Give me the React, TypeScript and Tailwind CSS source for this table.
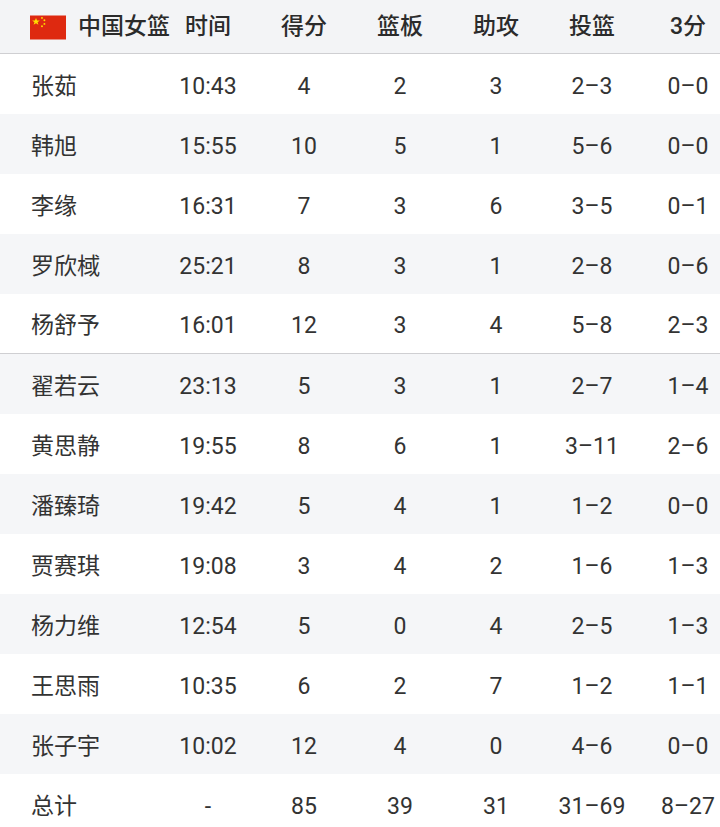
import React from "react";

const rows: [string, string, string, string, string, string, string][] = [
  ["张茹", "10:43", "4", "2", "3", "2–3", "0–0"],
  ["韩旭", "15:55", "10", "5", "1", "5–6", "0–0"],
  ["李缘", "16:31", "7", "3", "6", "3–5", "0–1"],
  ["罗欣棫", "25:21", "8", "3", "1", "2–8", "0–6"],
  ["杨舒予", "16:01", "12", "3", "4", "5–8", "2–3"],
  ["翟若云", "23:13", "5", "3", "1", "2–7", "1–4"],
  ["黄思静", "19:55", "8", "6", "1", "3–11", "2–6"],
  ["潘臻琦", "19:42", "5", "4", "1", "1–2", "0–0"],
  ["贾赛琪", "19:08", "3", "4", "2", "1–6", "1–3"],
  ["杨力维", "12:54", "5", "0", "4", "2–5", "1–3"],
  ["王思雨", "10:35", "6", "2", "7", "1–2", "1–1"],
  ["张子宇", "10:02", "12", "4", "0", "4–6", "0–0"],
  ["总计", "-", "85", "39", "31", "31–69", "8–27"],
];

function Flag() {
  return (
    <svg width="36" height="25" viewBox="0 0 30 20" className="shrink-0">
      <rect width="30" height="20" fill="#de2910" />
      <polygon
        fill="#ffde00"
        points="5,2 5.9,4.2 8.2,4.2 6.3,5.6 7,7.8 5,6.5 3,7.8 3.7,5.6 1.8,4.2 4.1,4.2"
      />
      <circle cx="10" cy="2" r="0.8" fill="#ffde00" />
      <circle cx="12" cy="4" r="0.8" fill="#ffde00" />
      <circle cx="12" cy="7" r="0.8" fill="#ffde00" />
      <circle cx="10" cy="9" r="0.8" fill="#ffde00" />
    </svg>
  );
}

const font = {
  fontFamily: "Roboto, 'Noto Sans CJK SC', sans-serif",
};

export default function App() {
  return (
    <div
      className="w-[720px] h-[827px] overflow-hidden bg-white text-[23px] text-[#333] whitespace-nowrap"
      style={font}
    >
      <div className="grid grid-cols-[160px_repeat(6,96px)] h-[54px] pt-[2px] items-center bg-[#f3f4f6] border-b border-[#cfcfd2] text-[#2b2b2b] font-medium">
        <div className="flex items-center gap-[12px] pl-[30px]">
          <Flag />
          <span>中国女篮</span>
        </div>
        <div className="text-center">时间</div>
        <div className="text-center">得分</div>
        <div className="text-center">篮板</div>
        <div className="text-center">助攻</div>
        <div className="text-center">投篮</div>
        <div className="text-center">3分</div>
      </div>
      {rows.map((r, i) => (
        <div
          key={i}
          className={
            "grid grid-cols-[160px_repeat(6,96px)] h-[60px] pt-[6px] items-center " +
            (i % 2 === 1 ? "bg-[#f5f6f8] " : "bg-white ") +
            (i === 4 ? "border-b border-[#cfcfd2]" : "")
          }
        >
          <div className="pl-[31px]">{r[0]}</div>
          {r.slice(1).map((c, j) => (
            <div key={j} className="text-center">
              {c}
            </div>
          ))}
        </div>
      ))}
    </div>
  );
}
